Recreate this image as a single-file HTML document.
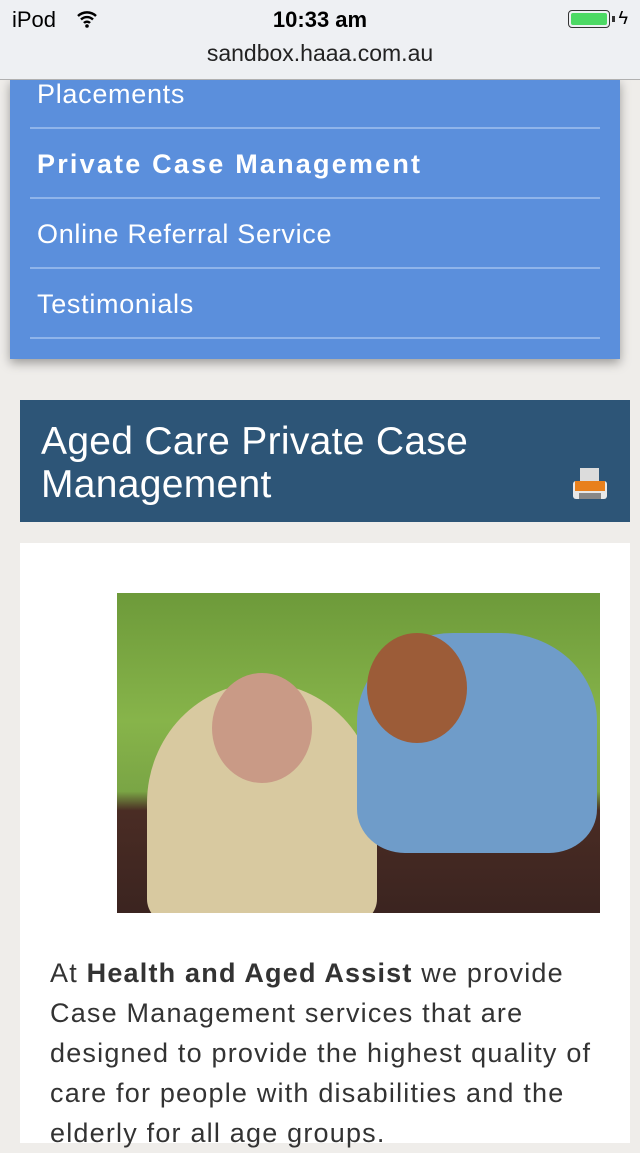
<!DOCTYPE html>
<html><head><style>
body{margin:0;width:640px;height:1136px;overflow:hidden;background:#efedea;font-family:"Liberation Sans",sans-serif;position:relative}
.bar{position:absolute;left:0;top:0;width:640px;height:79px;background:#eef0f3;border-bottom:1px solid #b0b0b0;z-index:5}
.menu{position:absolute;left:10px;top:79px;width:610px;height:280px;background:#5b8fdc;box-shadow:0 4px 10px rgba(0,0,0,.35)}
.item{position:absolute;left:20px;width:570px;height:70px;border-bottom:2px solid #8fb4ea;color:#fff;font-size:27px;box-sizing:border-box;padding-left:7px;line-height:70px;letter-spacing:0.7px}
.title{position:absolute;left:20px;top:400px;width:610px;height:122px;background:#2d5577;color:#fff;font-size:39px;line-height:43px;padding:20px 0 0 21px;box-sizing:border-box;letter-spacing:0.3px}
.card{position:absolute;left:20px;top:543px;width:610px;height:600px;background:#fff}
.photo{position:absolute;left:117px;top:593px;width:483px;height:320px;background:linear-gradient(180deg,#6d9a3a 0%,#87b44a 40%,#7aa545 62%,#4a2c24 68%,#3b2420 100%);overflow:hidden}
.txt{position:absolute;left:50px;top:953px;width:560px;font-size:27px;line-height:40px;color:#333;letter-spacing:1.2px}
</style></head><body>
<div class="bar">
<div style="position:absolute;left:12px;top:7px;font-size:22px">iPod</div>
<svg style="position:absolute;left:76px;top:10px" width="22" height="18" viewBox="0 0 22 18"><path d="M2 6a13 13 0 0 1 18 0M5 9.5a8.5 8.5 0 0 1 12 0M8 13a4 4 0 0 1 6 0" stroke="#000" stroke-width="2.4" fill="none"/><circle cx="11" cy="16" r="1.8"/></svg>
<div style="position:absolute;left:0;width:640px;top:7px;text-align:center;font-size:22px;font-weight:bold">10:33 am</div>
<div style="position:absolute;right:30px;top:10px;width:42px;height:18px;border:1px solid #333;border-radius:4px;box-sizing:border-box;padding:2px"><div style="background:#4cd964;height:100%;border-radius:2px"></div></div>
<div style="position:absolute;right:25px;top:16px;width:3px;height:6px;background:#333"></div>
<div style="position:absolute;right:12px;top:8px;font-size:18px">ϟ</div>
<div style="position:absolute;left:0;width:640px;top:40px;text-align:center;font-size:23px;color:#222">sandbox.haaa.com.au</div>
</div>
<div class="menu">
<div class="item" style="top:-20px">Placements</div>
<div class="item" style="top:50px;font-weight:bold;letter-spacing:2.2px">Private Case Management</div>
<div class="item" style="top:120px">Online Referral Service</div>
<div class="item" style="top:190px">Testimonials</div>
</div>
<div class="title">Aged Care Private Case<br>Management
<svg style="position:absolute;left:551px;top:66px" width="38" height="38" viewBox="0 0 38 38"><rect x="9" y="2" width="19" height="14" fill="#dcdcdc"/><rect x="2" y="15" width="34" height="18" rx="3" fill="#e8e8e8"/><rect x="4" y="15" width="30" height="10" fill="#e8801c"/><rect x="8" y="27" width="22" height="6" fill="#888"/></svg>
</div>
<div class="card"></div>
<div class="photo">
<div style="position:absolute;left:30px;top:90px;width:230px;height:240px;border-radius:50% 50% 10% 10%;background:#d8c9a0"></div>
<div style="position:absolute;left:95px;top:80px;width:100px;height:110px;border-radius:50%;background:#c99a86"></div>
<div style="position:absolute;left:240px;top:40px;width:240px;height:220px;border-radius:40% 40% 20% 20%;background:#6f9cc9"></div>
<div style="position:absolute;left:250px;top:40px;width:100px;height:110px;border-radius:50%;background:#9c5c38"></div>
</div>
<div class="txt">At <b>Health and Aged Assist</b> we provide Case Management services that are designed to provide the highest quality of care for people with disabilities and the elderly for all age groups.</div>
</body></html>
